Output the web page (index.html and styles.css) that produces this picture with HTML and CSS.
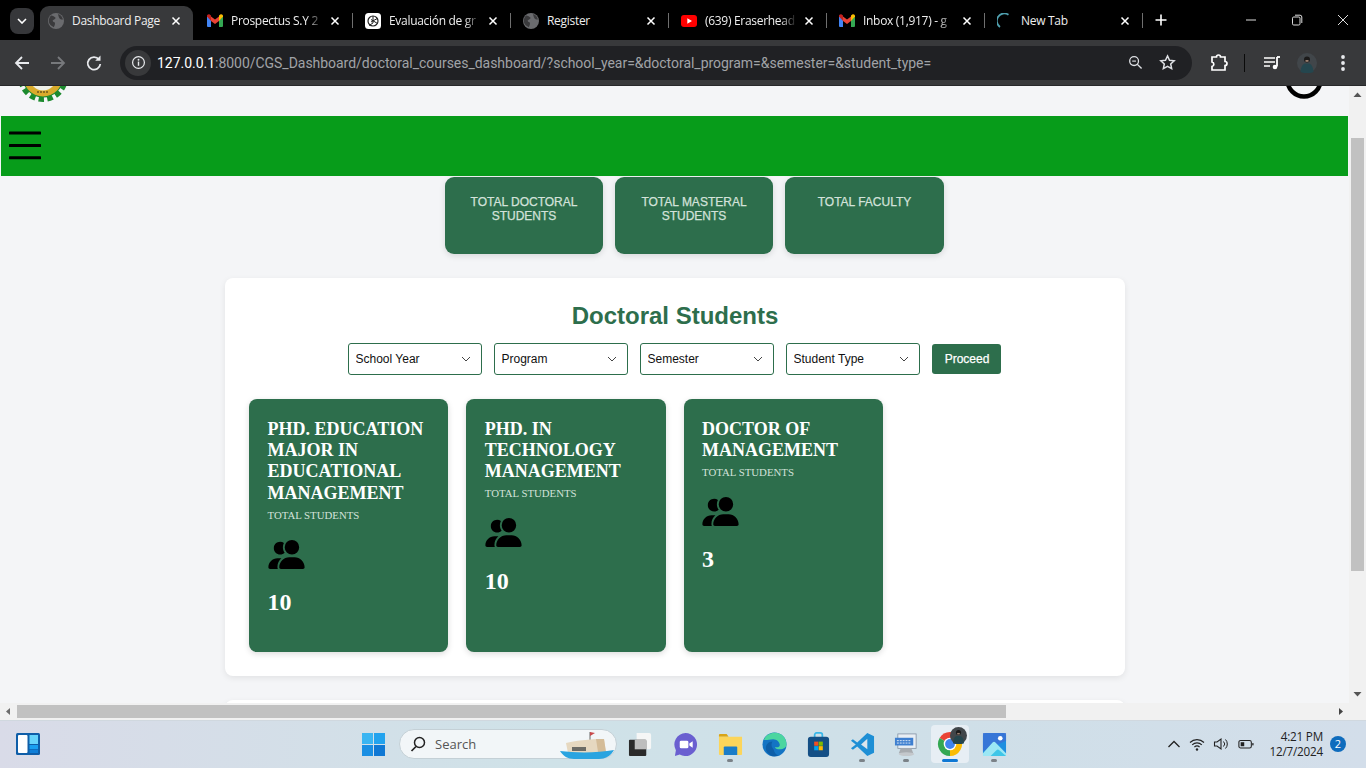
FILE: index.html
```html
<!DOCTYPE html>
<html lang="en">
<head>
<meta charset="utf-8">
<title>Dashboard Page</title>
<link rel="stylesheet" href="styles.css">
</head>
<body>
<svg class="sprite" aria-hidden="true">
  <symbol id="globe" viewBox="0 0 16 16">
    <circle cx="8" cy="8" r="8" fill="#6a6b6e"/>
    <path d="M3 2.600c2 .2 3.400 1 4.600 2.200-.3 1.400-1.600 1.800-2.800 2.400-.4 1.200.8 1.800 2 2.200.6 1.400-.2 2.800-1 4.800C3 13 .8 10.800.8 8c0-2 .8-4 2.200-5.400zM10 1c2.600.8 4.400 3 5 5.400-1.400.4-2.800-.2-3.600-1.200C10.800 4 10.200 2.600 10 1z" fill="#3a3a3c"/>
  </symbol>
  <symbol id="gmail" viewBox="0 0 16 14">
    <path d="M0 2.500 1.500 1 4 3v10H1a1 1 0 0 1-1-1z" fill="#4285f4"/>
    <path d="M12 3l2.500-2L16 2.500V12a1 1 0 0 1-1 1h-3z" fill="#34a853"/>
    <path d="M4 7V2.500L8 5.500l4-3V7L8 10z" fill="#ea4335"/>
    <path d="M0 2.500V2C0 .6 1.600-.2 2.700.6L4 1.600V7z" fill="#c5221f"/>
    <path d="M12 7V1.600L13.300.6C14.400-.2 16 .6 16 2v.5z" fill="#fbbc04"/>
  </symbol>
  <symbol id="close-x" viewBox="0 0 10 10">
    <path d="M1.500 1.500l7 7m0-7l-7 7" stroke="#fff" stroke-width="1.500" fill="none"/>
  </symbol>
  <symbol id="chev" viewBox="0 0 10 6">
    <path d="M1 1l4 4 4-4" stroke="#444" stroke-width="1" fill="none"/>
  </symbol>
  <symbol id="users" viewBox="0 0 640 512">
    <g transform="matrix(-1 0 0 1 640 0)">
      <path d="M96 128a128 128 0 1 1 256 0A128 128 0 1 1 96 128zM0 482.300C0 383.800 79.800 304 178.300 304h91.400C368.200 304 448 383.800 448 482.300c0 16.400-13.300 29.700-29.700 29.700H29.700C13.300 512 0 498.700 0 482.300zM609.300 512H471.400c5.400-9.400 8.600-20.300 8.600-32v-8c0-60.700-27.100-115.200-69.800-151.800c2.400-.1 4.700-.2 7.100-.2h61.400C567.800 320 640 392.200 640 481.300c0 17-13.800 30.700-30.700 30.700zM432 256c-31 0-59-12.600-79.300-32.900C372.400 196.500 384 163.600 384 128c0-26.800-6.600-52.100-18.300-74.300C384.300 40.100 407.200 32 432 32c61.900 0 112 50.100 112 112s-50.100 112-112 112z"/>
    </g>
  </symbol>
  <symbol id="avatar" viewBox="0 0 20 20">
    <circle cx="10" cy="10" r="10" fill="#41464a"/>
    <path d="M3.500 19c.5-6 2.500-8 4.500-8.500h4c2 .5 4 2.500 4.500 8.500-2 1-4 1-6.500 1s-4.500 0-6.500-1z" fill="#24464e"/>
    <circle cx="10" cy="6.500" r="3" fill="#1b1a1a"/>
    <path d="M8.500 7h3v1.800h-3z" fill="#9c8272"/>
  </symbol>
</svg>

<header class="tabstrip">
  <div class="tab-search"><svg class="tab-search-icon" viewBox="0 0 10 6"><path d="M1 1l4 4 4-4" stroke="#fff" stroke-width="1.600" fill="none"/></svg></div>
  <div class="tab tab-active">
    <svg class="favicon"><use href="#globe"/></svg><span class="tab-title tab-title-full">Dashboard Page</span><svg class="tab-close"><use href="#close-x"/></svg>
  </div>
  <div class="tab tab-sep">
    <svg class="favicon"><use href="#gmail"/></svg><span class="tab-title">Prospectus S.Y 2</span><svg class="tab-close"><use href="#close-x"/></svg>
  </div>
  <div class="tab tab-sep">
    <svg class="favicon" viewBox="0 0 16 16"><rect width="16" height="16" rx="3.500" fill="#fff"/><circle cx="8" cy="8" r="5" fill="none" stroke="#222" stroke-width="1.200"/><path d="M8 3v7l-4 2.500M12.300 5.500 6 9M12.500 10.500 6 6.500" stroke="#222" stroke-width="1" fill="none"/></svg><span class="tab-title">Evaluación de gr</span><svg class="tab-close"><use href="#close-x"/></svg>
  </div>
  <div class="tab tab-sep">
    <svg class="favicon"><use href="#globe"/></svg><span class="tab-title tab-title-full">Register</span><svg class="tab-close"><use href="#close-x"/></svg>
  </div>
  <div class="tab tab-sep">
    <svg class="favicon" viewBox="0 0 16 12"><rect width="16" height="12" rx="3" fill="#f00"/><path d="M6.300 3.200 11 6l-4.700 2.800z" fill="#fff"/></svg><span class="tab-title">(639) Eraserhead</span><svg class="tab-close"><use href="#close-x"/></svg>
  </div>
  <div class="tab tab-sep">
    <svg class="favicon"><use href="#gmail"/></svg><span class="tab-title">Inbox (1,917) - g</span><svg class="tab-close"><use href="#close-x"/></svg>
  </div>
  <div class="tab tab-sep">
    <svg class="favicon" viewBox="0 0 16 16"><path d="M3 14A7 7 0 0 1 11.500 1.800" fill="none" stroke="#4f9fae" stroke-width="1.800"/></svg><span class="tab-title tab-title-full">New Tab</span><svg class="tab-close"><use href="#close-x"/></svg>
  </div>
  <svg class="new-tab" viewBox="0 0 12 12"><path d="M6 .5v11M.5 6h11" stroke="#fff" stroke-width="1.600"/></svg>
  <div class="window-controls">
    <svg class="win-btn" viewBox="0 0 12 12"><path d="M1 6h10" stroke="#ddd"/></svg>
    <svg class="win-btn" viewBox="0 0 12 12"><rect x="1.500" y="3" width="7.500" height="8" rx="1.200" fill="none" stroke="#ddd"/><path d="M4 1.200h5a1.800 1.800 0 0 1 1.800 1.800v6" fill="none" stroke="#ddd"/></svg>
    <svg class="win-btn" viewBox="0 0 12 12"><path d="M1 1l10 10m0-10L1 11" stroke="#ddd"/></svg>
  </div>
</header>

<nav class="toolbar">
  <svg class="tool" viewBox="0 0 36 36"><path d="M25 18H12m6-6-6 6 6 6" stroke="#e8eaed" stroke-width="1.800" fill="none"/></svg>
  <svg class="tool" viewBox="0 0 36 36"><path d="M11 18h13m-6-6 6 6-6 6" stroke="#77797c" stroke-width="1.800" fill="none"/></svg>
  <svg class="tool" viewBox="0 0 36 36"><path d="M23 14.500A6.300 6.300 0 1 0 24.300 19" stroke="#e8eaed" stroke-width="1.800" fill="none"/><path d="M24.500 10.500v5.300h-5.300z" fill="#e8eaed"/></svg>
  <div class="omnibox">
    <span class="info-chip"><svg class="info-icon" viewBox="0 0 16 16"><circle cx="8" cy="8" r="6.300" fill="none" stroke="#e8eaed" stroke-width="1.300"/><path d="M8 7v4.500" stroke="#e8eaed" stroke-width="1.500"/><circle cx="8" cy="5" r="1" fill="#e8eaed"/></svg></span>
    <span class="url"><span class="url-host">127.0.0.1</span>:8000/CGS_Dashboard/doctoral_courses_dashboard/?school_year=&amp;doctoral_program=&amp;semester=&amp;student_type=</span>
    <svg class="omni-zoom" viewBox="0 0 16 16"><circle cx="6.500" cy="6.500" r="4.700" fill="none" stroke="#dfe1e5" stroke-width="1.400"/><path d="M10 10l4.500 4.500" stroke="#dfe1e5" stroke-width="1.500"/><path d="M4.500 6.500h4" stroke="#dfe1e5" stroke-width="1.200"/></svg>
    <svg class="omni-star" viewBox="0 0 16 16"><path d="M8 1.800l1.900 4.100 4.400.5-3.300 3 .9 4.400L8 11.600l-3.900 2.200.9-4.400-3.300-3 4.400-.5z" fill="none" stroke="#dfe1e5" stroke-width="1.400"/></svg>
  </div>
  <svg class="tool tool-ext" viewBox="0 0 36 36"><path d="M12 12h4.500a2 2 0 0 1 4 0H25v4.500a2 2 0 0 1 0 4V25H12v-3.500a2.300 2.300 0 0 0 0-4.500z" fill="none" stroke="#fff" stroke-width="1.700"/></svg>
  <span class="tool-sep"></span>
  <svg class="tool" viewBox="0 0 36 36"><path d="M11 13h11M11 17h11M11 21h6" stroke="#fff" stroke-width="1.600"/><path d="M24 12v9.500" stroke="#fff" stroke-width="1.800"/><path d="M24 12h3" stroke="#fff" stroke-width="1.800"/><circle cx="22" cy="22" r="2.300" fill="#fff"/></svg>
  <span class="tool tool-center"><svg class="profile"><use href="#avatar"/></svg></span>
  <svg class="tool" viewBox="0 0 36 36"><circle cx="18" cy="12" r="1.900" fill="#e8eaed"/><circle cx="18" cy="18" r="1.900" fill="#e8eaed"/><circle cx="18" cy="24" r="1.900" fill="#e8eaed"/></svg>
</nav>

<div class="viewport">
  <div class="viewport-main">
    <main class="page">
      <div class="site-head">
        <svg class="logo" viewBox="0 0 50 50">
          <circle cx="25" cy="25" r="20.500" fill="#1c8a2e"/>
          <circle cx="25" cy="25" r="22.500" fill="none" stroke="#1c8a2e" stroke-width="5" stroke-dasharray="5.500 3.400" stroke-dashoffset="1.500"/>
          <circle cx="25" cy="25" r="19.500" fill="#d9ab2c"/>
          <circle cx="25" cy="25" r="13.500" fill="#eef0e8"/>
          <path d="M19 40h12" stroke="#6e5a1c" stroke-width="1.500" stroke-dasharray="2 1"/>
        </svg>
        <svg class="user-ring" viewBox="0 0 38 38"><circle cx="19" cy="19" r="16.500" fill="none" stroke="#000" stroke-width="4.500"/></svg>
      </div>
      <div class="green-bar">
        <svg class="burger" viewBox="0 0 32 30"><path d="M1 2h30M1 14.400h30M1 26.800h30" stroke="#000" stroke-width="3" fill="none" stroke-linecap="round"/></svg>
      </div>
      <section class="stats">
        <div class="stat">TOTAL DOCTORAL STUDENTS</div>
        <div class="stat">TOTAL MASTERAL STUDENTS</div>
        <div class="stat stat-wide">TOTAL FACULTY</div>
      </section>
      <section class="panel">
        <h1 class="panel-title">Doctoral Students</h1>
        <form class="filters">
          <label class="select-wrap"><select class="select"><option>School Year</option></select><svg class="select-chev"><use href="#chev"/></svg></label>
          <label class="select-wrap"><select class="select"><option>Program</option></select><svg class="select-chev"><use href="#chev"/></svg></label>
          <label class="select-wrap"><select class="select"><option>Semester</option></select><svg class="select-chev"><use href="#chev"/></svg></label>
          <label class="select-wrap"><select class="select"><option>Student Type</option></select><svg class="select-chev"><use href="#chev"/></svg></label>
          <button class="proceed" type="button">Proceed</button>
        </form>
        <div class="cards">
          <article class="card">
            <h3 class="card-title">PHD. EDUCATION MAJOR IN EDUCATIONAL MANAGEMENT</h3>
            <p class="card-sub">TOTAL STUDENTS</p>
            <svg class="card-icon"><use href="#users"/></svg>
            <div class="card-num">10</div>
          </article>
          <article class="card">
            <h3 class="card-title">PHD. IN TECHNOLOGY MANAGEMENT</h3>
            <p class="card-sub">TOTAL STUDENTS</p>
            <svg class="card-icon"><use href="#users"/></svg>
            <div class="card-num">10</div>
          </article>
          <article class="card">
            <h3 class="card-title">DOCTOR OF MANAGEMENT</h3>
            <p class="card-sub">TOTAL STUDENTS</p>
            <svg class="card-icon"><use href="#users"/></svg>
            <div class="card-num">3</div>
          </article>
        </div>
      </section>
      <section class="panel panel-next"></section>
    </main>
    <div class="hscroll">
      <svg class="arrow-btn" viewBox="0 0 17 17"><path d="M10 5v7L6 8.500z" fill="#6b6b6b"/></svg>
      <div class="hscroll-track"><div class="hscroll-thumb"></div></div>
      <svg class="arrow-btn" viewBox="0 0 17 17"><path d="M7 5v7l4-3.500z" fill="#444"/></svg>
    </div>
  </div>
  <div class="vscroll">
    <svg class="arrow-btn" viewBox="0 0 17 17"><path d="M4.500 11h8L8.500 6.500z" fill="#555"/></svg>
    <div class="vscroll-track"><div class="vscroll-thumb"></div></div>
    <svg class="arrow-btn" viewBox="0 0 17 17"><path d="M4.500 6h8l-4 4.500z" fill="#555"/></svg>
    <div class="scroll-corner"></div>
  </div>
</div>

<footer class="taskbar">
  <div class="task-left">
    <svg class="widgets" viewBox="0 0 24 22"><rect width="24" height="22" rx="1.500" fill="#0f5ea8"/><rect x="2" y="2" width="9.500" height="18" rx="1" fill="#fff"/><rect x="13.500" y="2" width="8.500" height="9" fill="#66d4fb"/><rect x="13.500" y="12" width="8.500" height="4" fill="#199ff0"/><rect x="13.500" y="16.500" width="8.500" height="3.500" fill="#0f7fd8"/></svg>
  </div>
  <div class="task-center">
    <svg class="start" viewBox="0 0 23 23"><rect width="11" height="11" fill="#3ab5f2"/><rect x="12" width="11" height="11" fill="#22a3ee"/><rect y="12" width="11" height="11" fill="#1a8fe3"/><rect x="12" y="12" width="11" height="11" fill="#0f78d4"/></svg>
    <div class="search">
      <svg class="search-icon" viewBox="0 0 16 16"><circle cx="9.500" cy="6.500" r="5" fill="none" stroke="#222" stroke-width="1.500"/><path d="M6 10.500 1.500 15" stroke="#222" stroke-width="1.700"/></svg>
      <span class="search-text">Search</span>
      <svg class="search-art" viewBox="0 0 54 30"><path d="M30 2v8" stroke="#666"/><path d="M30 2l5 1-5 3z" fill="#c8494a"/><path d="M6 13c8-2 24-4 38-4l2 14H8z" fill="#e6d8c0"/><path d="M12 17h14v4H12z" fill="#6b6b66"/><path d="M36 9h8l2 13h-8z" fill="#d4bc98"/><path d="M0 21c16 2 38 2 54-1-3 6-9 9-15 9H14C8 29 3 26 0 21z" fill="#2aa4e0"/></svg>
    </div>
    <div class="task-icon">
      <svg class="app" viewBox="0 0 26 26"><path d="M9 1h13a2 2 0 0 1 2 2v13a2 2 0 0 1-2 2H9z" fill="#f5f6f6"/><rect x="1" y="8" width="18" height="17" rx="1" fill="#2a2a2a"/><rect x="7" y="8" width="12" height="10" fill="#bdbdbd"/></svg>
    </div>
    <div class="task-icon task-shift">
      <svg class="app" viewBox="0 0 26 26"><path d="M13 1a12 12 0 1 1-6 22.400L2 25l1-6A12 12 0 0 1 13 1z" fill="#6a5fd0"/><rect x="7" y="9" width="9" height="8" rx="1.500" fill="#fff"/><path d="M17 12l3.500-2.500v7L17 14z" fill="#fff"/></svg>
    </div>
    <div class="task-icon task-running task-shift">
      <svg class="app" viewBox="0 0 26 26"><path d="M1 3a1 1 0 0 1 1-1h7l2 3H1z" fill="#d9a417"/><path d="M1 5h24v18a1 1 0 0 1-1 1H2a1 1 0 0 1-1-1z" fill="#fcd55a"/><path d="M7 15h12a1 1 0 0 1 1 1v8H6v-8a1 1 0 0 1 1-1z" fill="#1a7dc8"/></svg>
    </div>
    <div class="task-icon">
      <svg class="app" viewBox="0 0 26 26"><circle cx="13" cy="13" r="12.500" fill="#1474c4"/><path d="M2 8C5 1 13-.5 19 2c4 2 6.500 6 6.500 11 0 3-3 5-7 5-3 0-5-1-5-2.500 2 .8 5 .3 5-2 0-3-3-6-7-6-4 0-7.500 1.500-9.500 .5z" fill="#4cd6a0"/><path d="M12 18c-2-2-3-5-1-8-4 0-7 3-7 7 0 3 2 6 6 8 2 .5 5 .5 7-.5-3-1-4-3-5-6.500z" fill="#0d5ea8"/></svg>
    </div>
    <div class="task-icon">
      <svg class="app" viewBox="0 0 26 26"><path d="M9 6V3a2 2 0 0 1 2-2h4a2 2 0 0 1 2 2v3" fill="none" stroke="#38b6e8" stroke-width="1.800"/><rect x="2" y="5" width="22" height="21" rx="3" fill="#144f85"/><rect x="8.500" y="10" width="4.300" height="4.300" fill="#f25022"/><rect x="13.200" y="10" width="4.300" height="4.300" fill="#7fba00"/><rect x="8.500" y="14.700" width="4.300" height="4.300" fill="#00a4ef"/><rect x="13.200" y="14.700" width="4.300" height="4.300" fill="#ffb900"/></svg>
    </div>
    <div class="task-icon task-running">
      <svg class="app" viewBox="0 0 26 26"><path d="M18 1l7 3.500v17L18 25 7.500 15 3 18.500 1 17l5-4-5-4 2-1.500L7.500 11z" fill="#1e8fd5"/><path d="M18 7l-6.500 6 6.500 5z" fill="#dbe5ec"/></svg>
    </div>
    <div class="task-icon task-running">
      <svg class="app" viewBox="0 0 26 26"><rect x="4" y="2" width="19" height="15" fill="#e8eef4" stroke="#7f8ea0" stroke-width=".8"/><rect x="1" y="6" width="19" height="8" fill="#3e7fd0"/><path d="M3 9h15M3 11.500h15" stroke="#dfe9f5" stroke-dasharray="2 1"/><path d="M7 17h11l2 5H5z" fill="#a8acb0"/><ellipse cx="13" cy="23" rx="8" ry="2" fill="#c4c8cc"/></svg>
    </div>
    <div class="task-icon task-chrome">
      <svg class="app-chrome" viewBox="0 0 30 30">
        <path d="M15 15 4.600 9A12 12 0 0 1 25.400 9z" fill="#ea4335"/>
        <path d="M15 15 25.400 9A12 12 0 0 1 15 27z" fill="#fbbc04"/>
        <path d="M15 15V27A12 12 0 0 1 4.600 9z" fill="#34a853"/>
        <circle cx="15" cy="15" r="6.300" fill="#fff"/>
        <circle cx="15" cy="15" r="4.900" fill="#3f84ee"/>
      </svg>
      <svg class="chrome-badge"><use href="#avatar"/></svg>
    </div>
    <div class="task-icon task-running">
      <svg class="app" viewBox="0 0 26 26"><rect x="1" y="1" width="24" height="24" rx="3" fill="#1f8fe0"/><path d="M1 1h24v8L1 20z" fill="#3d6fd4" opacity=".8"/><circle cx="19" cy="6.500" r="2.400" fill="#fff"/><path d="M1 22l10-11c1-1 2-1 3 0l11 11v3H1z" fill="#9be7f4"/><path d="M9 25l6-6c1-1 2-1 3 0l7 6z" fill="#3fc6e8"/></svg>
    </div>
  </div>
  <div class="task-right">
    <svg class="tray tray-caret" viewBox="0 0 14 14"><path d="M1.500 10 7 4.500l5.500 5.500" stroke="#222" stroke-width="1.300" fill="none"/></svg>
    <svg class="tray tray-wifi" viewBox="0 0 16 16"><path d="M1 6.500a10 10 0 0 1 14 0M3.200 8.800a7 7 0 0 1 9.600 0M5.400 11a4 4 0 0 1 5.200 0" stroke="#222" fill="none" stroke-width="1.100"/><circle cx="8" cy="13.500" r="1.200" fill="#222"/></svg>
    <svg class="tray" viewBox="0 0 16 16"><path d="M1.500 6v4h2.500l4 3V3L4 6z" fill="none" stroke="#222" stroke-width="1.100"/><path d="M10.500 5.500a3.500 3.500 0 0 1 0 5M12.500 3.500a6.500 6.500 0 0 1 0 9" stroke="#222" fill="none"/></svg>
    <svg class="tray tray-batt" viewBox="0 0 18 16"><rect x="1" y="4" width="14" height="8.500" rx="2" fill="none" stroke="#222" stroke-width="1.200"/><rect x="3" y="6" width="4" height="4.500" fill="#222"/><rect x="16" y="7" width="1.500" height="2.500" fill="#222"/></svg>
    <div class="clock"><span>4:21 PM</span><span>12/7/2024</span></div>
    <span class="notif">2</span>
  </div>
</footer>
</body>
</html>
```

FILE: styles.css
```css
* { box-sizing: border-box; }
html, body { margin: 0; padding: 0; height: 100%; overflow: hidden; }
body { width: 1366px; height: 768px; display: flex; flex-direction: column; font-family: "Liberation Sans", Arial, sans-serif; background: #000; }
.sprite { width: 0; height: 0; position: absolute; }

/* tab strip */
.tabstrip { height: 40px; flex: none; display: flex; align-items: flex-end; background: #000; padding-left: 10px; color: #fff; }
.tab-search { width: 24px; height: 26px; margin-right: 3px; margin-bottom: 6px; background: #36373a; border-radius: 8px; display: flex; align-items: center; justify-content: center; }
.tab-search-icon { width: 10px; height: 6px; }
.tab { width: 158px; height: 34px; flex: none; display: flex; align-items: center; padding: 0 0 4px 12px; position: relative; }
.tab-sep::after { content: ""; position: absolute; right: 0; top: 7px; height: 15px; width: 1px; background: #6f6f6f; }
.tab-active { padding-left: 11px; }
.tab-active::before { content: ""; position: absolute; left: 3px; right: 2px; top: 0; bottom: 0; background: #38393b; border-radius: 9px 9px 0 0; z-index: 0; }
.tab-active > * { position: relative; z-index: 1; }
.favicon { width: 16px; height: 16px; flex: none; margin-right: 8px; }
.tab-title { width: 92px; flex: none; white-space: nowrap; font: 12px/16px "Open Sans", sans-serif; letter-spacing: -.3px; color: #eee; -webkit-mask-image: linear-gradient(90deg, #000 82%, transparent 100%); mask-image: linear-gradient(90deg, #000 82%, transparent 100%); }
.tab-title-full { -webkit-mask-image: none; mask-image: none; }
.tab-close { width: 10px; height: 10px; flex: none; margin-left: 7px; }
.new-tab { width: 12px; height: 12px; margin: 0 0 14px 12px; flex: none; }
.window-controls { display: flex; margin-left: 78px; margin-bottom: 14px; gap: 34px; }
.win-btn { width: 12px; height: 12px; flex: none; }

/* toolbar */
.toolbar { height: 46px; flex: none; display: flex; align-items: center; background: #38393b; padding-left: 4px; border-bottom: 1px solid #27282a; }
.tool { width: 36px; height: 36px; flex: none; }
.tool-center { display: flex; align-items: center; justify-content: center; }
.tool-ext { margin-left: 8px; }
.tool-sep { width: 1px; height: 18px; background: #0a0a0a; margin: 0 8px 0 8px; flex: none; }
.profile { width: 20px; height: 20px; }
.omnibox { width: 1072px; height: 34px; margin-left: 8px; flex: none; background: #202124; border-radius: 17px; display: flex; align-items: center; padding-left: 5px; }
.info-chip { width: 26px; height: 26px; border-radius: 50%; background: #38393b; display: flex; align-items: center; justify-content: center; flex: none; }
.info-icon { width: 15px; height: 15px; }
.url { margin-left: 6px; width: 960px; flex: none; font: 14px/20px Roboto, sans-serif; letter-spacing: -.03px; color: #a0a3a7; white-space: nowrap; }
.url-host { color: #fff; }
.omni-zoom { width: 15px; height: 15px; margin-left: 11px; flex: none; }
.omni-star { width: 17px; height: 17px; margin-left: 16px; flex: none; }

/* viewport */
.viewport { height: 634px; flex: none; display: flex; background: #f4f5f7; }
.viewport-main { width: 1349px; flex: none; display: flex; flex-direction: column; }
.page { height: 617px; flex: none; overflow: hidden; background: #f4f5f7; }
.site-head { height: 30px; display: flex; justify-content: space-between; align-items: flex-end; padding: 0 26px 14px 18px; }
.logo { width: 50px; height: 50px; flex: none; }
.user-ring { width: 38px; height: 38px; flex: none; margin-bottom: 3px; }
.green-bar { height: 60px; margin: 0 1px; background: #079c1a; display: flex; align-items: center; padding-left: 8px; }
.burger { width: 32px; height: 30px; }
.stats { display: flex; gap: 12px; padding-top: 1px; margin-left: 445px; }
.stat { width: 158px; height: 77px; background: #2d6e4c; border-radius: 9px; padding: 18px 20px 0; text-align: center; color: #d3e2da; font-size: 12px; font-weight: 400; line-height: 14px; -webkit-text-stroke: .25px #d3e2da; box-shadow: 0 2px 6px rgba(0,0,0,.12); }
.stat-wide { width: 159px; }
.panel { width: 900px; margin: 24px 0 0 225px; padding: 24px; background: #fff; border-radius: 8px; box-shadow: 0 2px 6px rgba(0,0,0,.08); }
.panel-next { height: 100px; }
.panel-title { margin: 0; font-size: 24px; line-height: 28px; font-weight: 700; color: #2d6e4c; text-align: center; }
.filters { margin-top: 13px; display: flex; justify-content: center; align-items: center; gap: 12px; margin-left: -2px; }
.select-wrap { position: relative; display: block; width: 134px; height: 32px; flex: none; }
.select { appearance: none; -webkit-appearance: none; width: 100%; height: 100%; border: 1px solid #2d6e4c; border-radius: 3px; background: #fff; padding: 0 7px; font: 12px "Liberation Sans", Arial, sans-serif; color: #111; }
.select-chev { position: absolute; right: 11px; top: 13px; width: 10px; height: 6px; pointer-events: none; }
.proceed { width: 69px; height: 30px; border: 0; padding: 0 0 0 2px; border-radius: 3px; background: #2d6e4c; color: #fff; font: 400 12px "Liberation Sans", Arial, sans-serif; -webkit-text-stroke: .25px #fff; flex: none; }
.cards { margin-top: 24px; display: grid; grid-template-columns: repeat(4, 199.300px); gap: 18px; }
.card { height: 253px; background: #2d6e4c; border-radius: 8px; padding: 19.500px 18px 18px 18.500px; box-shadow: 0 2px 6px rgba(0,0,0,.14); font-family: "Liberation Serif", "Times New Roman", serif; color: #fff; }
.card-title { margin: 0; font-size: 18px; line-height: 21.400px; font-weight: 700; }
.card-sub { margin: 4.500px 0 0; font-size: 10.800px; line-height: 13px; color: #d3e2da; }
.card-icon { display: block; width: 37px; height: 29px; margin-top: 18px; fill: #000; }
.card-num { margin-top: 19.400px; font-size: 24px; line-height: 28px; font-weight: 700; }

/* scrollbars */
.hscroll { height: 17px; flex: none; display: flex; background: #f1f1f1; }
.arrow-btn { width: 17px; height: 17px; flex: none; display: block; }
.hscroll-track { flex: 1; padding: 2px 0; }
.hscroll-thumb { width: 989px; height: 13px; background: #c1c1c1; }
.vscroll { width: 17px; flex: none; display: flex; flex-direction: column; background: #f1f1f1; }
.vscroll-track { flex: 1; padding: 35px 2px 0; }
.vscroll-thumb { height: 433px; background: #c1c1c1; }
.scroll-corner { height: 17px; flex: none; background: #f1f1f1; }

/* taskbar */
.taskbar { height: 48px; flex: none; display: grid; grid-template-columns: 362px auto 1fr; align-items: center; background: linear-gradient(90deg, #d9dbe8 0%, #cfe2e8 40%, #cfdfe8 70%, #d3deea 100%); box-shadow: inset 0 1px 0 #d0d8df; }
.task-left { padding-left: 16px; display: flex; }
.widgets { width: 24px; height: 22px; }
.task-center { display: flex; align-items: center; }
.start { width: 23px; height: 23px; margin-right: 14px; flex: none; }
.search { width: 218px; height: 30px; background: #f2f6f8; border: 1px solid #c4d0d6; border-radius: 15px; display: flex; align-items: center; padding-left: 10px; margin-right: 1px; position: relative; }
.search-icon { width: 16px; height: 16px; flex: none; }
.search-text { margin-left: 9px; font: 13px "Open Sans", sans-serif; color: #555; }
.search-art { position: absolute; right: 2px; top: 0; width: 54px; height: 30px; }
.task-icon { width: 44px; height: 38px; flex: none; display: flex; align-items: center; justify-content: center; position: relative; }
.task-shift { margin-left: 1px; }
.app { width: 25px; height: 25px; }
.task-running::after { content: ""; position: absolute; bottom: 1px; left: 19px; width: 6px; height: 3px; border-radius: 2px; background: #7b8288; }
.task-chrome { background: #e7eef4; border-radius: 4px; width: 38px; margin: 0 3px; }
.task-chrome::after { content: ""; position: absolute; bottom: 1px; left: 11px; width: 16px; height: 3px; border-radius: 2px; background: #0f78d4; }
.app-chrome { width: 30px; height: 30px; }
.chrome-badge { position: absolute; right: 2px; top: 2px; width: 17px; height: 17px; }
.task-right { display: flex; align-items: center; justify-content: flex-end; padding-right: 20px; }
.tray { width: 16px; height: 16px; margin-left: 8px; flex: none; }
.tray-caret { width: 14px; height: 14px; margin-right: 0; }
.tray-batt { margin-left: 9px; }
.clock { margin-left: 15px; display: flex; flex-direction: column; align-items: flex-end; font: 11.700px/15px "Open Sans", sans-serif; color: #222; letter-spacing: -.2px; }
.notif { width: 16px; height: 16px; margin-left: 7px; border-radius: 50%; background: #0f6cbd; color: #fff; font: 11px/16px "Open Sans", sans-serif; text-align: center; flex: none; }
```
